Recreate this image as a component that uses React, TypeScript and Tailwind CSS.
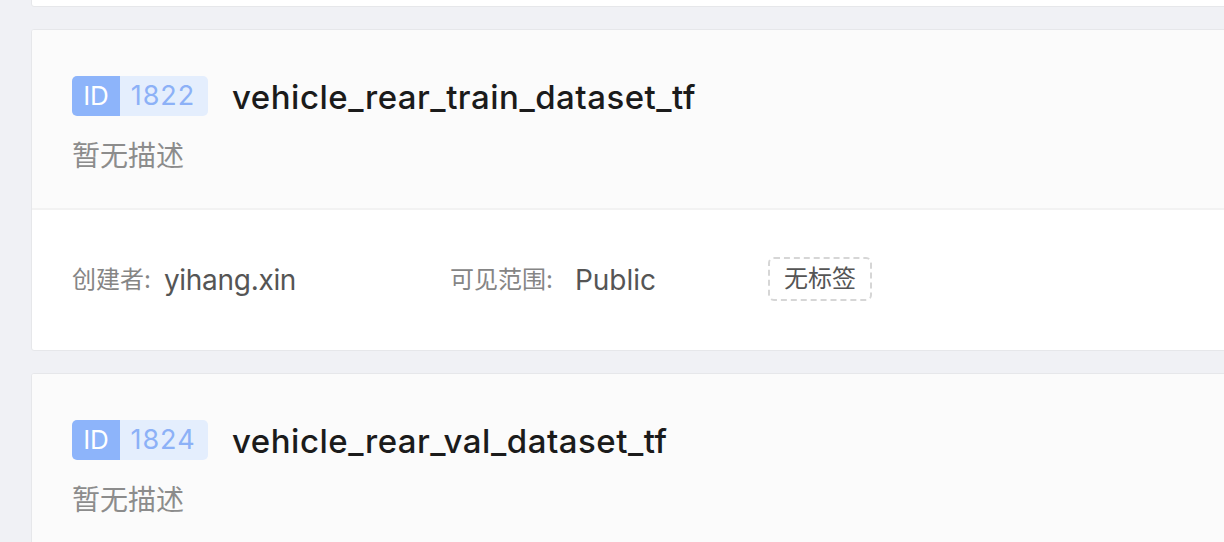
import React from 'react';

// Dataset list cards (partial view)

interface Dataset {
  id: number;
  name: string;
  creator: string;
  visibility: string;
}

const DATASETS: Dataset[] = [
  { id: 1821, name: 'vehicle_rear_dataset_tf', creator: 'yihang.xin', visibility: 'Public' },
  { id: 1822, name: 'vehicle_rear_train_dataset_tf', creator: 'yihang.xin', visibility: 'Public' },
  { id: 1824, name: 'vehicle_rear_val_dataset_tf', creator: 'yihang.xin', visibility: 'Public' },
];

const FONT = "font-['Inter','Noto_Sans_CJK_SC',sans-serif]";

const DatasetCard: React.FC<{ data: Dataset; className?: string }> = ({ data, className }) => (
  <div className={`border border-[#e6e7ea] rounded-[3px] bg-white overflow-hidden ${className ?? ''}`}>
    <div className="bg-[#fbfbfb] pl-[40px] pt-[46px] pb-[32px] border-b-2 border-[#f2f2f2]">
      <div className="flex items-center h-[40px]">
        <div className="flex h-[40px] rounded-[5px] overflow-hidden leading-[40px]">
          <span className="bg-[#8db4fa] text-white w-[48px] text-center text-[26px]">ID</span>
          <span className="bg-[#e4eefd] text-[#8cb1f7] w-[88px] pr-[2px] text-center text-[27px] tracking-[1px]">
            {data.id}
          </span>
        </div>
        <span className="ml-[24px] text-[33px] leading-[40px] font-medium text-[#1b1b1b] tracking-[0.5px] pt-[2px]">
          {data.name}
        </span>
      </div>
      <div className="mt-[20px] text-[28px] leading-[40px] text-[#8c8c8c]">暂无描述</div>
    </div>
    <div className="h-[140px] pl-[40px] flex items-center">
      <div className="w-[378px] flex items-center">
        <span className="text-[24px] text-[#858585]">创建者:</span>
        <span className="ml-[13px] text-[28px] text-[#555555] tracking-[-0.3px]">{data.creator}</span>
      </div>
      <div className="w-[318px] flex items-center">
        <span className="text-[24px] text-[#858585]">可见范围:</span>
        <span className="ml-[22px] text-[28px] text-[#555555]">{data.visibility}</span>
      </div>
      <span className="h-[44px] px-[14px] flex items-center border-2 border-dashed border-[#d6d6d6] rounded-[6px] text-[24px] text-[#555555] -mt-[2px]">
        无标签
      </span>
    </div>
  </div>
);

export default function App() {
  return (
    <div className={`w-[1224px] h-[542px] overflow-hidden bg-[#f0f1f5] ${FONT}`}>
      <div className="w-[1300px] pl-[31px] flex flex-col gap-[22px]">
        <DatasetCard data={DATASETS[0]} className="-mt-[315px]" />
        <DatasetCard data={DATASETS[1]} />
        <DatasetCard data={DATASETS[2]} />
      </div>
    </div>
  );
}
